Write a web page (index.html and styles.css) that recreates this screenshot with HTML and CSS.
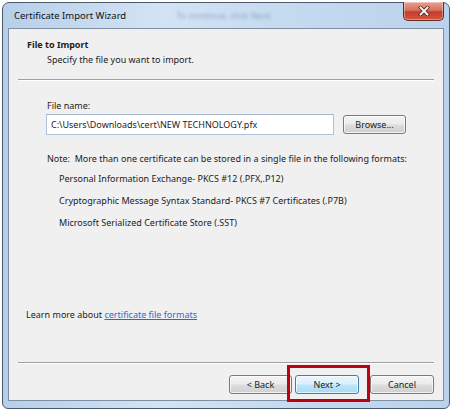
FILE: index.html
```
<!DOCTYPE html>
<html lang="en">
<head>
    <meta charset="UTF-8">
    <meta name="viewport" content="width=device-width, initial-scale=1.0">
    <title>Certificate Import Wizard</title>
    <link rel="stylesheet" href="styles.css">
</head>
<body>
    <div class="window">
        <div class="titlebar">
            <span class="title">Certificate Import Wizard</span>
            <span class="ghost">To continue, click Next.</span>
            <div class="close-btn">
                <svg width="12" height="10" viewBox="0 0 12 10">
                    <path d="M2.5 1.5 L9.5 8.5 M9.5 1.5 L2.5 8.5" stroke="#5a2620" stroke-width="3.4" stroke-linecap="square"/>
                    <path d="M2.5 1.5 L9.5 8.5 M9.5 1.5 L2.5 8.5" stroke="#ffffff" stroke-width="1.8" stroke-linecap="square"/>
                </svg>
            </div>
        </div>
        <div class="client">
            <div class="header">
                <div class="heading">File to Import</div>
                <div class="subheading">Specify the file you want to import.</div>
            </div>
            <div class="rule"></div>
            <div class="content">
                <div class="field-label">File name:</div>
                <div class="file-row">
                    <div class="file-input">C:\Users\Downloads\cert\NEW TECHNOLOGY.pfx</div>
                    <button class="btn browse-btn">Browse...</button>
                </div>
                <div class="note">Note:&nbsp; More than one certificate can be stored in a single file in the following formats:</div>
                <ul class="formats">
                    <li>Personal Information Exchange- PKCS #12 (.PFX,.P12)</li>
                    <li>Cryptographic Message Syntax Standard- PKCS #7 Certificates (.P7B)</li>
                    <li>Microsoft Serialized Certificate Store (.SST)</li>
                </ul>
                <div class="learn">Learn more about <a href="#" class="link">certificate file formats</a></div>
            </div>
            <div class="rule"></div>
            <div class="footer">
                <button class="btn back-btn">&lt; Back</button>
                <button class="btn next-btn">Next &gt;</button>
                <button class="btn cancel-btn">Cancel</button>
                <div class="highlight"></div>
            </div>
        </div>
    </div>
</body>
</html>
```

FILE: styles.css
```
body {
    margin: 0;
    background: #fff;
    font-family: "Noto Sans", "Open Sans", sans-serif;
    font-size: 9px;
    color: #1c1c1c;
}
.window {
    box-sizing: border-box;
    width: 448px;
    height: 407px;
    margin: 2px 0 0 2px;
    border: 1px solid #4b5a6c;
    border-radius: 7px 7px 6px 6px;
    background: linear-gradient(to right, #b6cfe9 0%, #d3e3f4 35%, #c7dbf0 60%, #bad2ec 100%);
    padding: 0 5px 7px 5px;
    display: flex;
    flex-direction: column;
}
.titlebar {
    height: 25px;
    display: flex;
    align-items: center;
    flex-shrink: 0;
}
.title {
    padding-left: 6px;
    font-size: 9.5px;
    color: #111;
}
.ghost {
    margin-left: 50px;
    font-size: 9px;
    color: #4d6888;
    filter: blur(1.4px);
    opacity: 0.45;
}
.close-btn {
    margin-left: auto;
    align-self: flex-start;
    margin-top: -1px;
    width: 41px;
    height: 19px;
    box-sizing: border-box;
    border: 1px solid #6e2a22;
    border-top: none;
    border-radius: 0 0 5px 5px;
    background: linear-gradient(to bottom, #e7a08f 0%, #d87462 45%, #c23f2c 55%, #d2573f 100%);
    display: flex;
    justify-content: center;
    align-items: center;
    box-shadow: inset 0 0 0 1px rgba(255,255,255,0.35);
}
.client {
    flex: 1;
    border: 1px solid #7f8fa2;
    background: #f0f0f0;
    display: flex;
    flex-direction: column;
}
.header {
    padding: 8px 0 12px 18px;
    line-height: 15px;
}
.heading {
    font-weight: bold;
}
.subheading {
    padding-left: 20px;
}
.rule {
    margin: 0 9px;
    border-top: 1px solid #a0a0a0;
    border-bottom: 1px solid #fff;
}
.content {
    flex: 1;
    display: flex;
    flex-direction: column;
    padding: 17px 0 40px 17px;
    line-height: 15px;
}
.field-label {
    padding-left: 21px;
}
.file-row {
    display: flex;
    gap: 9px;
    margin: 1px 0 0 20px;
}
.file-input {
    box-sizing: border-box;
    width: 288px;
    height: 21px;
    padding: 2px 4px;
    background: #fff;
    border: 1px solid #aec3da;
    border-top-color: #a3b6cc;
    white-space: nowrap;
}
.btn {
    box-sizing: border-box;
    height: 19px;
    padding: 0;
    font-family: inherit;
    font-size: 9px;
    color: #1c1c1c;
    border: 1px solid #7a7a7a;
    border-radius: 3px;
    background: linear-gradient(to bottom, #f4f4f4 0%, #ebebeb 48%, #dddddd 52%, #cfcfcf 100%);
    box-shadow: inset 0 0 0 1px rgba(255,255,255,0.7);
}
.browse-btn {
    width: 63px;
    margin-top: 1px;
}
.note {
    margin-top: 16px;
    padding-left: 21px;
}
.formats {
    list-style: none;
    margin: 5px 0 0 0;
    padding: 0 0 0 33px;
}
.formats li {
    margin-bottom: 7px;
}
.learn {
    margin-top: auto;
}
.link {
    color: #1f6fd0;
    text-decoration: underline;
}
.footer {
    position: relative;
    display: flex;
    justify-content: flex-end;
    padding: 11px 9px 6px 0;
}
.back-btn {
    width: 63px;
}
.next-btn {
    width: 64px;
    margin-left: 3px;
    border-color: #3c7fb1;
    background: linear-gradient(to bottom, #eaf6fd 0%, #d9f0fc 48%, #bee6fd 52%, #a7d9f5 100%);
}
.cancel-btn {
    width: 64px;
    margin-left: 11px;
}
.highlight {
    position: absolute;
    left: 278px;
    top: 1px;
    width: 83px;
    height: 37px;
    box-sizing: border-box;
    border: 3px solid #c0000a;
}
```
